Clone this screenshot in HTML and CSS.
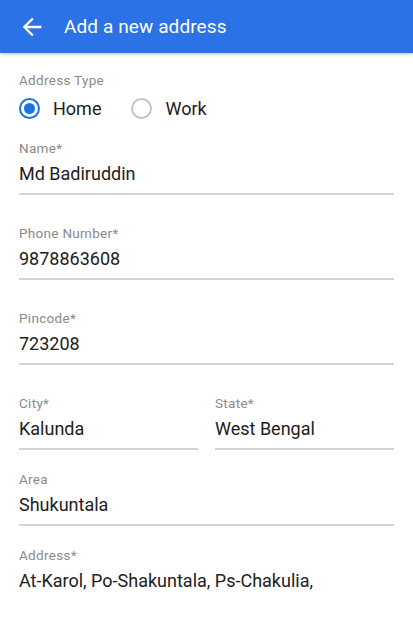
FILE: index.html
```html
<!DOCTYPE html>
<html lang="en">
<head>
<meta charset="utf-8">
<title>Add a new address</title>
<link rel="stylesheet" href="styles.css">
</head>
<body>
<header class="appbar">
  <svg class="back" viewBox="0 0 24 24" width="28" height="28" aria-hidden="true">
    <path d="M20 11H7.83l5.59-5.59L12 4l-8 8 8 8 1.41-1.41L7.83 13H20v-2z" fill="#fff"/>
  </svg>
  <h1 class="title">Add a new address</h1>
</header>
<main class="form">
  <div class="label label-type">Address Type</div>
  <div class="radios">
    <div class="radio">
      <span class="dot dot-on"></span>
      <span class="radio-text">Home</span>
    </div>
    <div class="radio">
      <span class="dot"></span>
      <span class="radio-text">Work</span>
    </div>
  </div>

  <div class="field field-first">
    <div class="label">Name*</div>
    <div class="value">Md Badiruddin</div>
  </div>
  <div class="field field-wide">
    <div class="label">Phone Number*</div>
    <div class="value">9878863608</div>
  </div>
  <div class="field field-wide">
    <div class="label">Pincode*</div>
    <div class="value">723208</div>
  </div>
  <div class="row field-wide">
    <div class="field">
      <div class="label">City*</div>
      <div class="value">Kalunda</div>
    </div>
    <div class="field">
      <div class="label">State*</div>
      <div class="value">West Bengal</div>
    </div>
  </div>
  <div class="field field-tight">
    <div class="label">Area</div>
    <div class="value">Shukuntala</div>
  </div>
  <div class="field field-tight">
    <div class="label">Address*</div>
    <div class="value value-multi">At-Karol, Po-Shakuntala, Ps-Chakulia,</div>
  </div>
</main>
</body>
</html>
```
FILE: styles.css
```css
* { box-sizing: border-box; }
html, body { margin: 0; padding: 0; background: #fff; }
body {
  font-family: Roboto, "Liberation Sans", sans-serif;
  color: #212121;
}
.appbar {
  height: 53px;
  background: #2b72e7;
  display: flex;
  align-items: center;
  padding-left: 18px;
  box-shadow: 0 1px 3px rgba(0,0,0,0.25);
}
.back { display: block; flex: none; }
.title {
  margin: 0 0 0 18px;
  font-size: 19px;
  font-weight: 400;
  color: #fff;
  letter-spacing: 0.1px;
}
.form { padding: 0 19px; }
.label {
  font-size: 13.5px;
  line-height: 16px;
  color: #8a8a8a;
  letter-spacing: 0.3px;
}
.label-type { margin-top: 19px; }
.radios {
  display: flex;
  gap: 30px;
  margin-top: 8px;
  height: 24px;
  align-items: center;
}
.radio { display: flex; align-items: center; gap: 13px; }
.dot {
  width: 21px; height: 21px;
  border-radius: 50%;
  border: 2px solid #c4c4c4;
  display: flex; align-items: center; justify-content: center;
}
.dot-on { border-color: #1a73e8; }
.dot-on::after {
  content: "";
  width: 11px; height: 11px;
  border-radius: 50%;
  background: #1a73e8;
}
.radio-text { font-size: 18px; color: #212121; }
.field-first { margin-top: 20px; }
.field-wide { margin-top: 30px; }
.field-tight { margin-top: 21px; }
.value {
  margin-top: 6px;
  font-size: 18px;
  line-height: 24px;
  padding-bottom: 7px;
  border-bottom: 2px solid #d4d4d4;
  color: #212121;
}
.value-multi { height: 100px; border-bottom: 0; }
.row {
  display: grid;
  grid-template-columns: 1fr 1fr;
  column-gap: 17px;
}
```
